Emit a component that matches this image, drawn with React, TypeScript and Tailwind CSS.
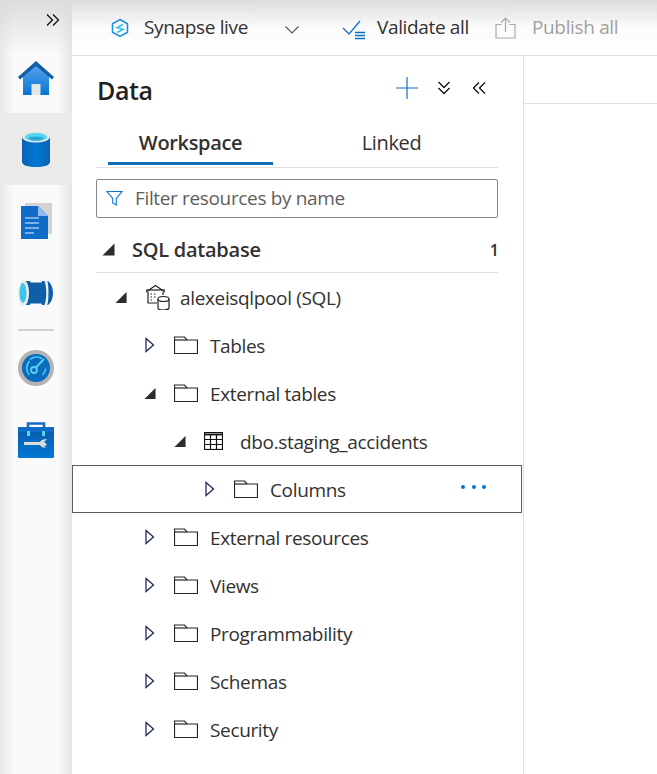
import React from 'react';

const font = { fontFamily: '"Open Sans", "Noto Sans", sans-serif' };

function HomeIcon() {
  return (
    <svg width="36" height="36" viewBox="0 0 36 36">
      <defs>
        <linearGradient id="homeBody" x1="0" y1="0" x2="0" y2="1">
          <stop offset="0" stopColor="#5ea0ef" />
          <stop offset="1" stopColor="#0078d4" />
        </linearGradient>
      </defs>
      <path d="M5 16 18 5l13 11v19H5z" fill="url(#homeBody)" />
      <path d="M0 17 18 1l18 16-2 2.500L18 6 2 19.500z" fill="#0f5fa8" />
      <rect x="13.500" y="24" width="9" height="11" fill="#e6e6e6" />
    </svg>
  );
}

function DatabaseIcon() {
  return (
    <svg width="28" height="36" viewBox="0 0 28 36">
      <defs>
        <linearGradient id="dbBody" x1="0" y1="0" x2="1" y2="0">
          <stop offset="0" stopColor="#0a62b5" />
          <stop offset="0.5" stopColor="#0078d4" />
          <stop offset="1" stopColor="#0a62b5" />
        </linearGradient>
      </defs>
      <path d="M0 6v25c0 3 6 5 14 5s14-2 14-5V6z" fill="url(#dbBody)" />
      <ellipse cx="14" cy="6" rx="14" ry="5.500" fill="#e3e3e3" />
      <ellipse cx="14" cy="6" rx="11" ry="4" fill="#50d4f0" />
      <ellipse cx="14" cy="7.500" rx="7" ry="2" fill="#2aa9d8" />
    </svg>
  );
}

function DocIcon() {
  return (
    <svg width="31" height="36" viewBox="0 0 31 36">
      <rect x="4" y="0" width="27" height="31" fill="#d4d4d4" />
      <path d="M0 3h17l10 10v23H0z" fill="#0f6cc7" />
      <path d="M17 3l10 10H17z" fill="#8fbcf0" />
      <path d="M4 15h14M4 20h14M4 25h14M4 30h9" stroke="#9cc8f2" strokeWidth="1.300" />
    </svg>
  );
}

function PipeIcon() {
  return (
    <svg width="36" height="26" viewBox="0 0 36 26">
      <path d="M6 1h6c1 3 1 5 1 6h10c0-1 0-3 1-6h6c3 2 5 7 5 12s-2 10-5 12h-6c-1-3-1-5-1-6H13c0 1 0 3-1 6H6z" fill="#0f5fa8" />
      <rect x="9" y="2.500" width="18" height="21" fill="#0f5fa8" />
      <path d="M26 0h3c2 4 2 22 0 26h-3c3-6 3-20 0-26z" fill="#f2f2f2" />
      <ellipse cx="5.500" cy="13" rx="5.500" ry="13" fill="#ececec" />
      <ellipse cx="5" cy="13" rx="3.500" ry="10" fill="#40c4ea" />
    </svg>
  );
}

function GaugeIcon() {
  return (
    <svg width="36" height="36" viewBox="0 0 36 36">
      <circle cx="18" cy="18" r="18" fill="#b3b3b3" />
      <circle cx="18" cy="18" r="14" fill="#0b6bbd" />
      <path d="M11.500 25a10 10 0 0 1 0-14" stroke="#50d4f0" strokeWidth="1.500" fill="none" />
      <path d="M24.500 25c2-2 3-4 3.200-6.500" stroke="#50d4f0" strokeWidth="1.500" fill="none" />
      <path d="M12 9.500a10 10 0 0 1 12-1" stroke="#50d4f0" strokeWidth="1.500" fill="none" />
      <circle cx="16" cy="20" r="3" fill="none" stroke="#50d4f0" strokeWidth="1.800" />
      <path d="M17.500 18 26 9" stroke="#50d4f0" strokeWidth="2" />
    </svg>
  );
}

function ToolboxIcon() {
  return (
    <svg width="36" height="36" viewBox="0 0 36 36">
      <defs>
        <linearGradient id="boxBody" x1="0" y1="0" x2="0" y2="1">
          <stop offset="0" stopColor="#0a5aa8" />
          <stop offset="1" stopColor="#0078d4" />
        </linearGradient>
      </defs>
      <path d="M10 6V1.500h16V6" stroke="#0f6cc7" strokeWidth="2.500" fill="none" />
      <rect x="0" y="5" width="36" height="31" rx="1" fill="url(#boxBody)" />
      <rect x="0" y="5" width="36" height="5" fill="#0f6cc7" />
      <rect x="9" y="9" width="3" height="5" fill="#50d4f0" />
      <rect x="24" y="9" width="3" height="5" fill="#50d4f0" />
      <path d="M6 20h16c1-2 3-3 7-3l-3 3 3 2.500-3 2.500 3 1c-4 0-6-1-7-3H6z" fill="#dcdcdc" />
    </svg>
  );
}

function SynapseIcon() {
  return (
    <svg width="20" height="20" viewBox="0 0 20 20" fill="none">
      <path d="M10 1.500 17.500 5.800v8.400L10 18.500 2.500 14.200V5.800z" stroke="#1a8fd8" strokeWidth="1.500" />
      <path d="M13 6.500 7 9.500l6 2-6 3" stroke="#37c2ee" strokeWidth="1.600" />
    </svg>
  );
}

function ValidateIcon() {
  return (
    <svg width="24" height="20" viewBox="0 0 24 20" fill="none" stroke="#0b6fc9" strokeWidth="1.200">
      <path d="M1 8l6 6L18 1" />
      <path d="M13 12.500h10M13 15.500h10M13 18.500h10" strokeWidth="1.500" />
    </svg>
  );
}

function PublishIcon() {
  return (
    <svg width="21" height="22" viewBox="0 0 21 22" fill="none" stroke="#aaaaaa" strokeWidth="1.200">
      <path d="M6.500 7.500H1v13.500h19V7.500h-5.500" />
      <path d="M10.500 15V1M6 5.500 10.500 1 15 5.500" />
    </svg>
  );
}

function Chevrons({ dir }: { dir: 'left' | 'right' | 'down' }) {
  const rotate = dir === 'left' ? 'rotate-180' : dir === 'down' ? 'rotate-90' : '';
  return (
    <svg width="14" height="14" viewBox="0 0 14 14" fill="none" stroke="#111111" strokeWidth="1.300" className={rotate}>
      <path d="M1 1.500 6.500 7 1 12.500M7 1.500 12.500 7 7 12.500" />
    </svg>
  );
}

function FilterIcon() {
  return (
    <svg width="17" height="17" viewBox="0 0 17 17" fill="none" stroke="#0b78d0" strokeWidth="1.100">
      <path d="M1 1.500h15l-5.700 7v6.500l-3.600-2v-4.500z" />
    </svg>
  );
}

function FolderIcon() {
  return (
    <svg width="24" height="18" viewBox="0 0 24 18" fill="none" stroke="#2b2224" strokeWidth="1.200">
      <path d="M.5 17V1h10l2.500 3H23.500v13.500H.5z" />
      <path d="M.5 4H13" />
    </svg>
  );
}

function PoolIcon() {
  return (
    <svg width="26" height="26" viewBox="0 0 26 26" fill="none" stroke="#222222" strokeWidth="1.200">
      <path d="M1 8 10.500 1.500 20 8" />
      <path d="M1 6h19" />
      <path d="M3 8v11h9M18 8v3" />
      <path d="M5.500 10h2M9 10h2M5.500 13h2M9 13h2M5.500 16h2" strokeDasharray="1.500 .8" />
      <path d="M13 15v9c0 1 2 2 5 2s6-1 6-2v-9" />
      <ellipse cx="18.500" cy="15" rx="5.500" ry="2.500" />
    </svg>
  );
}

function TableIcon() {
  return (
    <svg width="19" height="18" viewBox="0 0 19 18" fill="none" stroke="#111111" strokeWidth="1.200">
      <rect x=".5" y=".5" width="18" height="17" />
      <path d="M.5 2.500h18" strokeWidth="1.800" />
      <path d="M.5 7.500h18M.5 12.500h18M6.500 3v14.500M12.500 3v14.500" />
    </svg>
  );
}

function Caret({ open }: { open: boolean }) {
  if (open) {
    return (
      <svg width="13" height="13" viewBox="0 0 13 13">
        <path d="M12.500 .5V12.500H.5z" fill="#2f2b2b" />
      </svg>
    );
  }
  return (
    <svg width="12" height="16" viewBox="0 0 12 16" fill="none" stroke="#1f2a5c" strokeWidth="1.300">
      <path d="M2 1.500 9.500 8 2 14.500z" />
    </svg>
  );
}

type RowProps = {
  indent: string;
  open?: boolean;
  icon: React.ReactNode;
  label: string;
  gap: string;
  selected?: boolean;
};

function TreeRow({ indent, open = false, icon, label, gap, selected = false }: RowProps) {
  return (
    <div
      className={`h-12 flex items-center ${indent} ${selected ? 'border border-[#605e5c] w-[450px]' : ''}`}
    >
      <div className="w-3 flex justify-center shrink-0">
        <Caret open={open} />
      </div>
      <div className={`ml-[18px] ${gap} shrink-0 flex`}>{icon}</div>
      <span className="text-[19px] text-[#323130] leading-none tracking-[-0.35px] pt-[2px]">{label}</span>
      {selected && (
        <div className="ml-auto mr-[35px] flex gap-[6.500px] -mt-[4px]">
          <span className="w-1 h-1 rounded-full bg-[#0078d4]" />
          <span className="w-1 h-1 rounded-full bg-[#0078d4]" />
          <span className="w-1 h-1 rounded-full bg-[#0078d4]" />
        </div>
      )}
    </div>
  );
}

export default function App() {
  const folders = ['External resources', 'Views', 'Programmability', 'Schemas', 'Security'];

  return (
    <div className="w-[657px] h-[774px] flex overflow-hidden bg-white" style={font}>
      {/* left rail */}
      <aside className="w-[72px] shrink-0 flex flex-col bg-[linear-gradient(to_right,#e8e8e8_0,#fafafa_14px,#fafafa_58px,#e4e4e4_72px)]">
        <div className="h-[55px] shrink-0 flex justify-end items-start pt-[13px] pr-[12px] bg-gradient-to-b from-[#dcdcdc] to-transparent">
          <Chevrons dir="right" />
        </div>
        <div className="h-[58px] shrink-0 flex items-start justify-center pt-[5px]">
          <HomeIcon />
        </div>
        <div className="h-[72px] shrink-0 flex items-center justify-center bg-[#edebe9]">
          <DatabaseIcon />
        </div>
        <div className="h-[72px] shrink-0 flex items-center justify-center">
          <DocIcon />
        </div>
        <div className="h-[72px] shrink-0 flex items-center justify-center">
          <PipeIcon />
        </div>
        <div className="mx-[18px] h-0.5 shrink-0 bg-[#d2d2d2]" />
        <div className="h-[19px] shrink-0" />
        <div className="h-[36px] shrink-0 flex items-center justify-center">
          <GaugeIcon />
        </div>
        <div className="h-[36px] shrink-0" />
        <div className="h-[36px] shrink-0 flex items-center justify-center">
          <ToolboxIcon />
        </div>
      </aside>

      <div className="flex-1 flex flex-col min-w-0">
        {/* top bar */}
        <header className="h-[56px] shrink-0 flex items-center border-b border-[#e1dfdd] bg-gradient-to-b from-[#dcdcdc] via-[#fbfbfb] via-50% to-white text-[19px] tracking-[-0.35px] text-[#323130]">
          <div className="ml-[38px]">
            <SynapseIcon />
          </div>
          <span className="ml-[14px]">Synapse live</span>
          <svg width="14" height="8" viewBox="0 0 14 8" fill="none" stroke="#555555" strokeWidth="1.100" className="ml-[37px] mt-1">
            <path d="M.5 .5 7 7 13.500 .5" />
          </svg>
          <div className="ml-[43px] mt-1">
            <ValidateIcon />
          </div>
          <span className="ml-[11px]">Validate all</span>
          <div className="ml-[26px]">
            <PublishIcon />
          </div>
          <span className="ml-[16px] text-[#a19f9d]">Publish all</span>
        </header>

        <div className="flex-1 flex min-h-0">
          {/* data panel */}
          <section className="w-[452px] shrink-0 border-r border-[#e1dfdd] flex flex-col">
            <div className="h-[48px] mt-[10px] shrink-0 flex items-center pl-[25px] pr-[37px]">
              <h1 className="text-[25px] font-semibold text-[#1f1f1f] tracking-[-0.4px] leading-none">Data</h1>
              <svg width="24" height="24" viewBox="0 0 24 24" fill="none" stroke="#1a6fc4" strokeWidth="1.200" className="ml-auto mr-[1px] -mt-[4px]">
                <path d="M12 1v22M1 12h22" />
              </svg>
              <div className="ml-[17px] -mt-[4px]">
                <Chevrons dir="down" />
              </div>
              <div className="ml-[21px] -mt-[4px]">
                <Chevrons dir="left" />
              </div>
            </div>

            <div className="ml-[24px] mr-[25px] mt-[17px] h-[37px] shrink-0 flex border-b border-[#e1dfdd] relative">
              <div className="ml-[12px] w-[165px] h-[37px] flex items-start justify-center border-b-[3px] border-[#0f6cbd] text-[20px] font-semibold text-[#323130] tracking-[-0.35px] -mt-[3px]">
                Workspace
              </div>
              <div className="flex-1 flex items-start justify-center pl-[12px] text-[20px] text-[#323130] tracking-[-0.35px] -mt-[3px]">
                Linked
              </div>
            </div>

            <div className="ml-[24px] mr-[25px] mt-[11px] h-[39px] shrink-0 flex items-center border border-[#8a8886] rounded-[2px] pl-[9px]">
              <FilterIcon />
              <span className="ml-[12px] text-[19px] text-[#605e5c] tracking-[-0.35px]">Filter resources by name</span>
            </div>

            <div className="ml-[24px] mr-[25px] mt-[9px] h-[46px] shrink-0 flex items-center border-b border-[#e1dfdd]">
              <div className="ml-[6px]">
                <Caret open />
              </div>
              <span className="ml-[17px] text-[20px] font-semibold text-[#323130] tracking-[-0.25px]">SQL database</span>
              <span className="ml-auto -mr-px text-[16px] font-semibold text-[#323130]">1</span>
            </div>

            <TreeRow indent="pl-[43px]" open icon={<PoolIcon />} label="alexeisqlpool (SQL)" gap="mr-[9px] -ml-[-16px]" />
            <TreeRow indent="pl-[72px]" icon={<FolderIcon />} label="Tables" gap="mr-[12px]" />
            <TreeRow indent="pl-[72px]" open icon={<FolderIcon />} label="External tables" gap="mr-[12px]" />
            <TreeRow indent="pl-[102px]" open icon={<TableIcon />} label="dbo.staging_accidents" gap="mr-[17px]" />
            <TreeRow indent="pl-[131px]" icon={<FolderIcon />} label="Columns" gap="mr-[12px]" selected />
            {folders.map((name) => (
              <TreeRow key={name} indent="pl-[72px]" icon={<FolderIcon />} label={name} gap="mr-[12px]" />
            ))}
          </section>

          {/* editor area */}
          <div className="flex-1">
            <div className="h-[48px] border-b border-[#e1dfdd]" />
          </div>
        </div>
      </div>
    </div>
  );
}
